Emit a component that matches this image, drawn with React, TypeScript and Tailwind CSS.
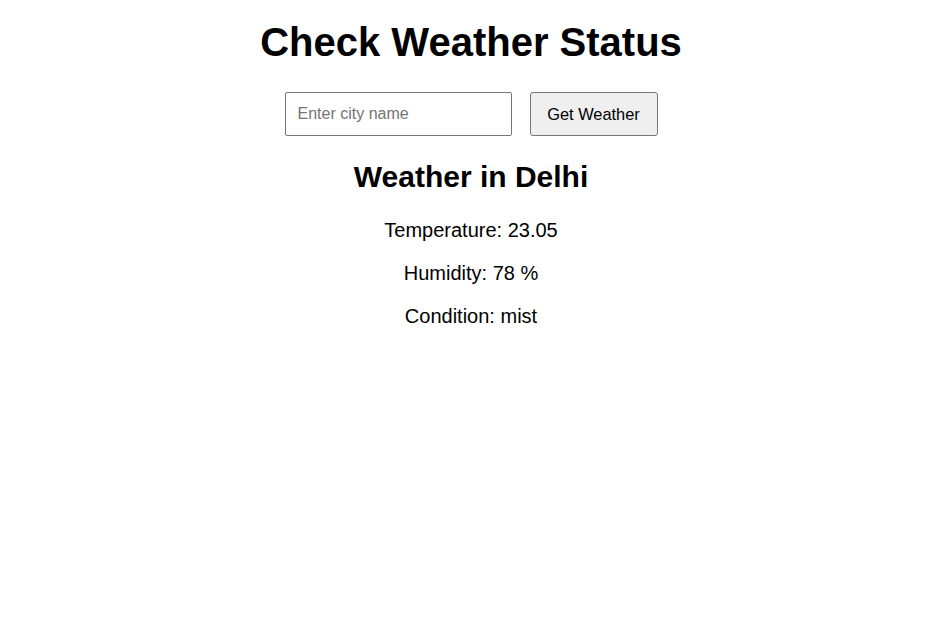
import React from "react";

export default function App() {
  return (
    <div
      className="min-h-[636px] w-full bg-white text-black flex flex-col items-center pt-[19px]"
      style={{ fontFamily: '"Liberation Sans", Arial, sans-serif' }}
    >
      <h1 className="text-[40px] leading-[46px] font-bold m-0">Check Weather Status</h1>
      <div className="mt-[27px] flex gap-[18px]">
        <input
          type="text"
          placeholder="Enter city name"
          className="w-[227px] h-[44px] border border-[#767676] rounded-[2px] px-[12px] text-[16px] text-black placeholder:text-[#757575] bg-white outline-none"
        />
        <button className="w-[128px] h-[44px] border border-[#767676] rounded-[3px] bg-[#efefef] text-[16.4px] text-black flex items-center justify-center">
          Get Weather
        </button>
      </div>
      <h2 className="mt-[24px] text-[30px] leading-[34px] font-bold">Weather in Delhi</h2>
      <div className="mt-[25px] flex flex-col items-center gap-[20px] text-[20px] leading-[23px]">
        <p>Temperature: 23.05</p>
        <p>Humidity: 78 %</p>
        <p>Condition: mist</p>
      </div>
    </div>
  );
}
